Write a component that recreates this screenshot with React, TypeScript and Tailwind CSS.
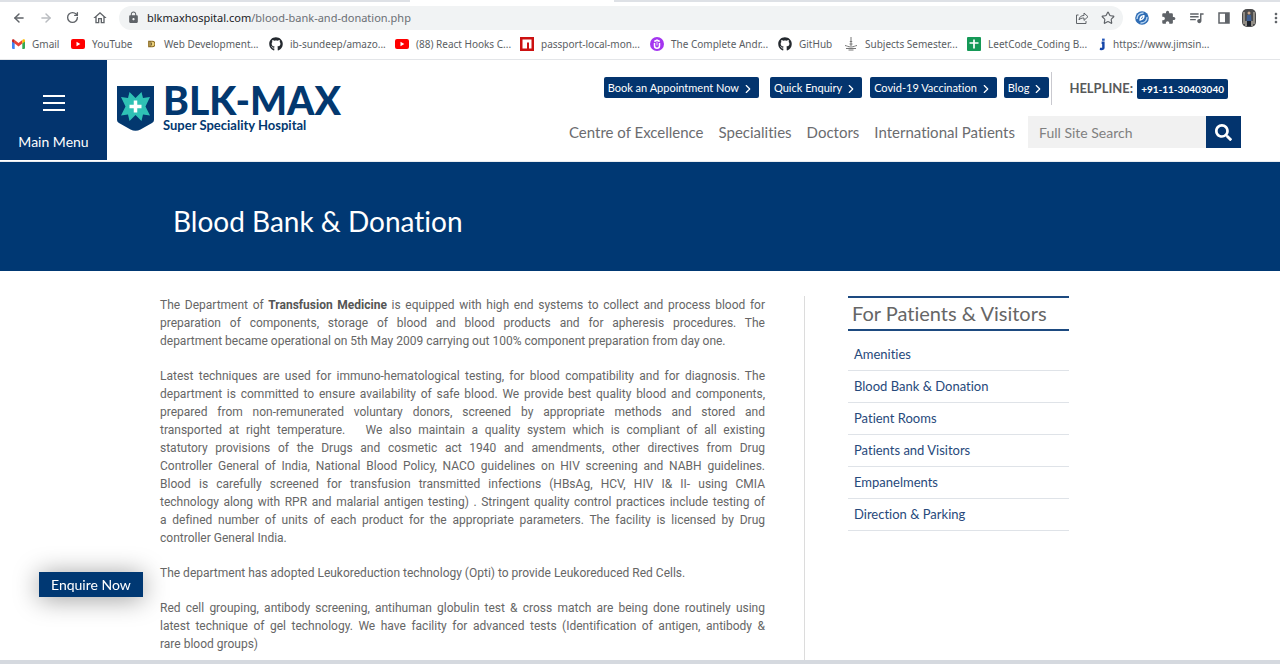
import React from "react";
import { ArrowLeft, ArrowRight, RotateCw, Star, ChevronRight } from "lucide-react";
import { FaGithub, FaSearch } from "react-icons/fa";
import { MdExtension, MdQueueMusic, MdLock, MdMoreVert, MdOutlineHome } from "react-icons/md";

const YouTubeIcon = () => (
  <svg viewBox="0 0 14 10" className="h-[10px] w-[14px]">
    <rect width="14" height="10" rx="2" fill="#f00" />
    <path d="M5.5 2.8v4.4L9.3 5z" fill="#fff" />
  </svg>
);

const GmailIcon = () => (
  <svg viewBox="0 0 24 18" className="h-[10px] w-[13px]">
    <path d="M0 3v13.5A1.5 1.5 0 0 0 1.5 18H5V7z" fill="#4285f4" />
    <path d="M19 7v11h3.500A1.500 1.500 0 0 0 24 16.500V3z" fill="#34a853" />
    <path d="M5 1.800v6.500l7 5.200 7-5.200V1.800l-7 5.200z" fill="#ea4335" />
    <path d="M0 2.500v1.800l5 4V1.800l-1.200-1C2.200-.5 0 .6 0 2.500z" fill="#c5221f" />
    <path d="M24 2.500v1.800l-5 4V1.800l1.200-1C21.800-.5 24 .6 24 2.500z" fill="#fbbc04" />
  </svg>
);

const WebDevIcon = () => (
  <svg viewBox="0 0 10 10" className="mr-[2px] ml-[2px] h-[8px] w-[7px]">
    <path d="M1 1h5a4 4 0 0 1 0 8H1z" fill="#e9cf7a" stroke="#8d6b20" strokeWidth="1.500" />
    <path d="M3 1v8M5 3v4" stroke="#4a3a1c" strokeWidth="1" />
  </svg>
);

const NpmIcon = () => (
  <svg viewBox="0 0 14 14" className="h-[14px] w-[14px]">
    <rect width="14" height="14" fill="#c11" />
    <path d="M2.500 2.500h9v9H9v-6H7v6H2.500z" fill="#fff" />
  </svg>
);

const UdemyIcon = () => (
  <svg viewBox="0 0 14 14" className="h-[14px] w-[14px]">
    <circle cx="7" cy="7" r="7" fill="#a435f0" />
    <path d="M4.500 6v2.700a2.500 2.500 0 0 0 5 0V6M4.300 4.500 7 3l2.700 1.500" fill="none" stroke="#fff" strokeWidth="1.500" />
    <path d="M7 4.500v4" stroke="#fff" strokeWidth=".8" />
  </svg>
);

const LampIcon = () => (
  <svg viewBox="0 0 14 14" className="h-[14px] w-[14px]" fill="none" stroke="#777">
    <path d="M7 0v9M5.800 4.500h2.400M1 8.500c2 .2 3 1.500 6 1.500s4-1.300 6-1.500M2 11.500h10M4.500 13h5M5.500 7h3" />
  </svg>
);

const SheetsIcon = () => (
  <svg viewBox="0 0 14 14" className="h-[14px] w-[14px]">
    <rect width="14" height="14" rx="1" fill="#159957" />
    <path d="M7 2.500v9M2.500 6h9" stroke="#fff" strokeWidth="1.700" />
  </svg>
);

const JimsIcon = () => (
  <svg viewBox="0 0 8 14" className="ml-[2px] h-[13px] w-[7px]">
    <path d="M3.500 1.500h3" stroke="#2456b8" strokeWidth="2.500" />
    <path d="M3 5h2v6q0 1.500-4 1" fill="none" stroke="#1546a8" strokeWidth="2.800" />
  </svg>
);

const ShareIcon = () => (
  <svg viewBox="0 0 14 14" className="h-[14px] w-[14px]" fill="none" stroke="#5f6368">
    <path d="M3.500 4H1.500v8.500h9.500V10" />
    <path d="M4 9c.3-3 2-4.500 5-4.500V2l4 3.700-4 3.700V7C6.500 7 5 7.600 4 9z" strokeLinejoin="round" />
  </svg>
);

const SwirlIcon = () => (
  <svg viewBox="0 0 14 14" className="h-[14px] w-[14px]">
    <circle cx="7" cy="7" r="6.800" fill="#2f6db5" />
    <path d="M2 8C2 4 5 2 8.500 2M12 6c0 4-3 6-6.500 6" fill="none" stroke="#b9d6f2" strokeWidth="1.400" />
    <path d="M4.500 10c-.5-4 1.500-6 5-6 .5 3-1 5-5 6z" fill="#fff" />
    <path d="M6.500 8c.2-1.200.6-1.800 1.500-2" stroke="#2f6db5" fill="none" />
  </svg>
);

const PanelIcon = () => (
  <svg viewBox="0 0 12 12" className="h-[12px] w-[12px]">
    <rect x="1" y="1" width="10" height="10" fill="none" stroke="#5f6368" strokeWidth="1.500" />
    <path d="M7 1h4v10H7z" fill="#5f6368" />
  </svg>
);

const ProfilePhoto = () => (
  <svg viewBox="0 0 14 18" className="h-[18px] w-[14px]">
    <rect width="14" height="18" rx="5" fill="#4b4b4c" />
    <path d="M2 3v12M12 3v12M4 12v5M10 12v5" stroke="#a8a298" strokeWidth="1.500" />
    <circle cx="7" cy="4" r="1.500" fill="#c8a890" />
    <path d="M5 6h4l.5 6h-5z" fill="#3f5f91" />
    <path d="M5 12h4v5H5z" fill="#1e222c" />
  </svg>
);

const Shield = () => (
  <svg viewBox="0 0 37 45" className="h-[45px] w-[37px] shrink-0">
    <path d="M0 0h37v34q0 2-2 3l-11.500 6.500q-5 2.500-10 0L2 37q-2-1-2-3z" fill="#03386f" />
    <path
      d="M18.500 12 24.500 6l1.500 6 7-1-4.500 9.500 4.500 9-7-1-1.500 6.500-6-6-6 6L11 28.500l-7 1 4.500-9L4 11l7 1 1.500-6z"
      fill="#2fc1b5"
    />
    <path d="M18.500 14.500v12M12.500 20.500h12" stroke="#fff" strokeWidth="3.500" />
  </svg>
);

const bookmarks = [
  { label: "Gmail", icon: <GmailIcon />, box: "w-[59px]" },
  { label: "YouTube", icon: <YouTubeIcon />, box: "w-[75px]" },
  { label: "Web Development...", icon: <WebDevIcon />, box: "w-[123px]" },
  { label: "ib-sundeep/amazo...", icon: <FaGithub size={14} color="#24292f" />, box: "w-[126px]" },
  { label: "(88) React Hooks C...", icon: <YouTubeIcon />, box: "w-[125px]" },
  { label: "passport-local-mon...", icon: <NpmIcon />, box: "w-[130px]" },
  { label: "The Complete Andr...", icon: <UdemyIcon />, box: "w-[128px]" },
  { label: "GitHub", icon: <FaGithub size={14} color="#24292f" />, box: "w-[66px]" },
  { label: "Subjects Semester...", icon: <LampIcon />, box: "w-[123px]" },
  { label: "LeetCode_Coding B...", icon: <SheetsIcon />, box: "w-[130px]" },
  { label: "https://www.jimsin...", icon: <JimsIcon />, box: "w-[120px]" },
];

function BrowserBar() {
  return (
    <div className="border-b border-[#e3e5e8] bg-white font-['Noto_Sans',sans-serif]">
      <div className="flex h-[2px] bg-[#dee1e6]">
        <div className="ml-[32%] w-[16%] bg-white" />
      </div>
      <div className="flex h-[31px] items-center text-[#5f6368]">
        <div className="flex w-[119px] shrink-0 items-center gap-[13px] pl-3">
          <button aria-label="Back"><ArrowLeft size={14} strokeWidth={2.5} /></button>
          <button aria-label="Forward" className="text-[#b9bcc0]"><ArrowRight size={14} strokeWidth={2.5} /></button>
          <button aria-label="Reload"><RotateCw size={13} strokeWidth={2.5} /></button>
          <button aria-label="Home"><MdOutlineHome size={16} /></button>
        </div>
        <div className="flex h-6 grow items-center rounded-full bg-[#f1f3f4] pr-2 pl-2">
          <MdLock size={13} />
          <a href="#" className="ml-[7px] grow text-[11px] leading-4 text-[#6b6f74]">
            <span className="text-[#202124]">blkmaxhospital.com</span>/blood-bank-and-donation.php
          </a>
          <button aria-label="Share"><ShareIcon /></button>
          <button aria-label="Bookmark" className="ml-3"><Star size={14} strokeWidth={2} /></button>
        </div>
        <div className="flex w-[157px] shrink-0 items-center justify-between pl-3">
          <button aria-label="Downloader"><SwirlIcon /></button>
          <button aria-label="Extensions"><MdExtension size={15} /></button>
          <button aria-label="Media"><MdQueueMusic size={17} /></button>
          <button aria-label="Side panel"><PanelIcon /></button>
          <button aria-label="Profile"><ProfilePhoto /></button>
          <button aria-label="More" className="-mr-1"><MdMoreVert size={16} /></button>
        </div>
      </div>
      <nav aria-label="Bookmarks" className="flex h-[26px] items-center overflow-hidden pb-1 pl-3">
        {bookmarks.map((b) => (
          <a key={b.label} href="#" className={`flex shrink-0 items-center gap-[7px] text-[10px] leading-4 whitespace-nowrap text-[#5a5e63] ${b.box}`}>
            {b.icon}
            {b.label}
          </a>
        ))}
      </nav>
    </div>
  );
}

const actions = [
  { label: "Book an Appointment Now", gap: "mr-[11px]" },
  { label: "Quick Enquiry", gap: "mr-2" },
  { label: "Covid-19 Vaccination", gap: "mr-[7px]" },
  { label: "Blog", gap: "" },
];
const sections = ["Centre of Excellence", "Specialities", "Doctors", "International Patients"];

function Header() {
  return (
    <header className="flex h-[102px] items-start justify-between border-b border-[#e9ecef] bg-white">
      <div className="flex">
        <button className="flex h-[100px] w-[107px] flex-col items-center bg-[#03346e] text-[14px] leading-5 text-white">
          <span className="mt-[35px] flex w-[22px] flex-col gap-[5px]">
            <span className="h-[2px] bg-white" />
            <span className="h-[2px] bg-white" />
            <span className="h-[2px] bg-white" />
          </span>
          <span className="mt-[21px]">Main Menu</span>
        </button>
        <a href="#" className="mt-[26px] ml-[10px] flex gap-[9px] text-[#03386f]">
          <Shield />
          <span className="flex flex-col">
            <span className="text-[39px] leading-[29px] font-black whitespace-nowrap">BLK-MAX</span>
            <span className="text-[13px] leading-5 font-bold whitespace-nowrap">Super Speciality Hospital</span>
          </span>
        </a>
      </div>
      <div className="mr-[39px] flex flex-col">
        <div className="mt-3 flex h-[33px] items-center self-end pr-[13px]">
          <div className="flex h-full items-center border-r border-[#c9c9cf] pr-[2px] pb-[2px]">
            {actions.map((a) => (
              <button key={a.label} className={`flex h-[21px] items-center gap-[2px] rounded-[2px] bg-[#03346e] px-1 text-[11px] leading-4 whitespace-nowrap text-white ${a.gap}`}>
                {a.label}
                <ChevronRight size={14} className="mt-[3px]" />
              </button>
            ))}
          </div>
          <span className="ml-[17px] text-[13px] font-bold text-[#58595b]">HELPLINE:</span>
          <a href="tel:+911130403040" className="ml-1 rounded-[2px] bg-[#03346e] px-1 text-[10px] leading-5 font-bold text-white">+91-11-30403040</a>
        </div>
        <div className="mt-[11px] flex h-8 items-center justify-end">
          <nav className="flex gap-[15px] pr-[13px] text-[15px] whitespace-nowrap text-[#6b6c6f]">
            {sections.map((s) => (
              <a key={s} href="#">{s}</a>
            ))}
          </nav>
          <form className="flex h-8">
            <input type="text" aria-label="Full Site Search" placeholder="Full Site Search" className="w-[178px] bg-[#f1f1f1] px-[11px] text-[14px] placeholder:text-[#808080]" />
            <button type="button" aria-label="Search" className="flex w-[35px] items-center justify-center bg-[#03346e] text-white"><FaSearch size={17} /></button>
          </form>
        </div>
      </div>
    </header>
  );
}

const paragraphs: React.ReactNode[][] = [
  [
    <>The Department of <strong className="font-bold text-[#555]">Transfusion Medicine</strong> is equipped with high end systems to collect and process blood for</>,
    "preparation of components, storage of blood and blood products and for apheresis procedures. The",
    "department became operational on 5th May 2009 carrying out 100% component preparation from day one.",
  ],
  [
    "Latest techniques are used for immuno-hematological testing, for blood compatibility and for diagnosis. The",
    "department is committed to ensure availability of safe blood. We provide best quality blood and components,",
    "prepared from non-remunerated voluntary donors, screened by appropriate methods and stored and",
    "transported at right temperature. \u00a0 We also maintain a quality system which is compliant of all existing",
    "statutory provisions of the Drugs and cosmetic act 1940 and amendments, other directives from Drug",
    "Controller General of India, National Blood Policy, NACO guidelines on HIV screening and NABH guidelines.",
    "Blood is carefully screened for transfusion transmitted infections (HBsAg, HCV, HIV I& II- using CMIA",
    "technology along with RPR and malarial antigen testing) . Stringent quality control practices include testing of",
    "a defined number of units of each product for the appropriate parameters. The facility is licensed by Drug",
    "controller General India.",
  ],
  ["The department has adopted Leukoreduction technology (Opti) to provide Leukoreduced Red Cells."],
  [
    "Red cell grouping, antibody screening, antihuman globulin test & cross match are being done routinely using",
    "latest technique of gel technology. We have facility for advanced tests (Identification of antigen, antibody &",
    "rare blood groups)",
  ],
];

const links = ["Amenities", "Blood Bank & Donation", "Patient Rooms", "Patients and Visitors", "Empanelments", "Direction & Parking"];

export default function App() {
  return (
    <div className="flex min-h-screen flex-col bg-white font-['Lato',sans-serif] [font-variant-ligatures:none]">
      <BrowserBar />
      <Header />
      <section className="bg-[#003873] text-white">
        <h1 className="mx-auto max-w-[960px] px-[13px] pt-[39px] pb-[30px] text-[28px] leading-10">Blood Bank &amp; Donation</h1>
      </section>
      <main className="mx-auto flex w-full max-w-[960px] grow items-stretch pt-[25px] text-[#666]">
        <article className="w-[645px] space-y-[17px] border-r border-[#dcdcdc] pr-[39px] pb-[7px] font-['Roboto',sans-serif] text-[12px] leading-[18px]">
          {paragraphs.map((lines, i) => (
            <p key={i}>
              {lines.map((line, j) => (
                <span key={j} className={j < lines.length - 1 ? "block text-justify [text-align-last:justify]" : "block"}>{line} </span>
              ))}
            </p>
          ))}
        </article>
        <aside className="ml-[43px] w-[221px]">
          <h2 className="border-y-2 border-[#1d4a80] px-1 text-[20px] leading-[31px] whitespace-nowrap">For Patients &amp; Visitors</h2>
          <ul className="mt-2 text-[13px] leading-[31px] text-[#27497b]">
            {links.map((l) => (
              <li key={l} className="border-b border-[#dfe3e8] px-[6px]"><a href="#">{l}</a></li>
            ))}
          </ul>
        </aside>
      </main>
      <footer className="h-1 bg-[#d5d9df]" />
      <button className="fixed bottom-[67px] left-[39px] bg-[#003873] px-3 text-[14px] leading-[25px] text-white shadow-[0_2px_26px_rgba(0,0,0,0.4)]">Enquire Now</button>
    </div>
  );
}
